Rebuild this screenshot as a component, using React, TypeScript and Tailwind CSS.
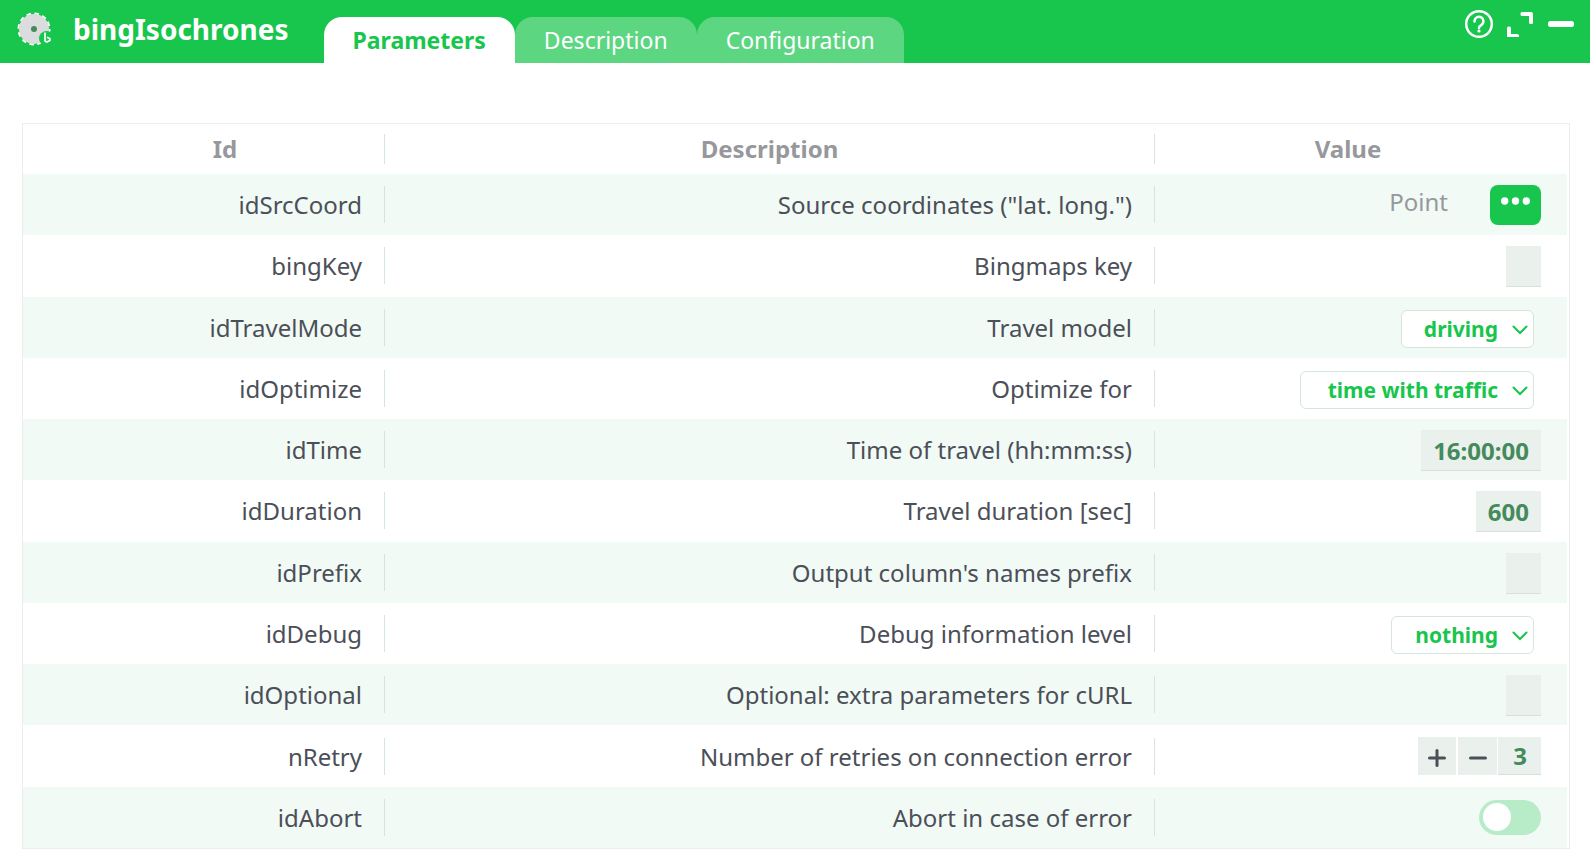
import { useState } from 'react';
import type { ReactNode } from 'react';

type ParamKind = 'point' | 'text' | 'select' | 'number' | 'toggle';

interface Param {
  id: string;
  description: string;
  kind: ParamKind;
  value?: string;
  options?: string[];
  width?: string;
}

const TABS = ['Parameters', 'Description', 'Configuration'];

const PARAMS: Param[] = [
  { id: 'idSrcCoord', description: 'Source coordinates ("lat. long.")', kind: 'point' },
  { id: 'bingKey', description: 'Bingmaps key', kind: 'text', value: '' },
  {
    id: 'idTravelMode',
    description: 'Travel model',
    kind: 'select',
    value: 'driving',
    options: ['driving', 'walking', 'transit'],
    width: 'w-[133px]'
  },
  {
    id: 'idOptimize',
    description: 'Optimize for',
    kind: 'select',
    value: 'time with traffic',
    options: ['time with traffic', 'time', 'distance'],
    width: 'w-[234px]'
  },
  { id: 'idTime', description: 'Time of travel (hh:mm:ss)', kind: 'text', value: '16:00:00' },
  { id: 'idDuration', description: 'Travel duration [sec]', kind: 'text', value: '600' },
  { id: 'idPrefix', description: "Output column's names prefix", kind: 'text', value: '' },
  {
    id: 'idDebug',
    description: 'Debug information level',
    kind: 'select',
    value: 'nothing',
    options: ['nothing', 'errors', 'all'],
    width: 'w-[143px]'
  },
  { id: 'idOptional', description: 'Optional: extra parameters for cURL', kind: 'text', value: '' },
  { id: 'nRetry', description: 'Number of retries on connection error', kind: 'number', value: '3' },
  { id: 'idAbort', description: 'Abort in case of error', kind: 'toggle' }
];

const Logo = () => (
  <svg className="size-[34px] shrink-0" viewBox="0 0 34 34" aria-hidden="true">
    <circle cx="17" cy="17" r="15.5" fill="none" stroke="#fff" strokeWidth="2" strokeDasharray="4.5 3.615" />
    <circle cx="17" cy="17" r="15" fill="#dadcde" />
    <circle cx="17" cy="17" r="3" fill="#458a5c" />
    <circle cx="29.500" cy="26.500" r="7.500" fill="#18c54d" />
    <path d="M28 20.500v8.500l1.800 1 3-1.500v-2l-2.800-1.200" fill="none" stroke="#fff" strokeWidth="1.700" />
  </svg>
);

const HelpIcon = () => (
  <svg className="h-[30px] w-[30px]" viewBox="0 0 30 30" fill="none" stroke="#fff" aria-hidden="true">
    <circle cx="15" cy="15" r="12.800" strokeWidth="2.500" />
    <path d="M10.500 12.500V12a4.500 4.500 0 1 1 6.800 4.100c-1.600 1-2.300 1.200-2.300 3" strokeWidth="2.500" strokeLinecap="round" />
    <circle cx="15" cy="22" r="1.600" fill="#fff" stroke="none" />
  </svg>
);

const ExpandIcon = () => (
  <svg className="h-[30px] w-[30px]" viewBox="0 0 30 30" fill="#fff" aria-hidden="true">
    <path d="M17 3h9q2 0 2 2v8.500q0 1.500-1.500 1.500h-1q-1.500 0-1.500-1.500V7h-7q-1.500 0-1.500-1.500v-1Q15.500 3 17 3z" />
    <path d="M2 19q0-1.500 1.500-1.500h1Q6 17.500 6 19v6h6q2 0 2 1.500v1.500H2z" />
  </svg>
);

const MinimizeIcon = () => (
  <svg className="h-[30px] w-[30px]" viewBox="0 0 30 30" aria-hidden="true">
    <rect x="2" y="12" width="26" height="6" rx="2.500" fill="#fff" />
  </svg>
);

const PlusMinusIcon = ({ plus }: { plus?: boolean }) => (
  <svg className="size-[18px]" viewBox="0 0 18 18" fill="none" stroke="#4b4f58" strokeWidth="3" strokeLinecap="round" aria-hidden="true">
    <path d="M1.500 9h15" />
    {plus && <path d="M9 1.500v15" />}
  </svg>
);

const fieldClass =
  'field-sizing-content border-b border-[#d7e1dc] bg-[#eaf0ec] text-right text-2xl font-bold text-[#458a5c] outline-none';

const PointField = ({ id }: { id: string }) => (
  <div className="flex items-center justify-end">
    <span className="mr-[42px] pb-1.5 text-[#96989c]">Point</span>
    <button
      type="button"
      id={id}
      aria-label="Edit coordinates"
      className="flex h-10 w-[51px] justify-center rounded-lg bg-[#18c54d] pt-3"
    >
      <svg className="h-2 w-[30px]" viewBox="0 0 30 8" fill="#fff" aria-hidden="true">
        <circle cx="3.700" cy="4" r="3.700" />
        <circle cx="14.500" cy="4" r="3.700" />
        <circle cx="25.300" cy="4" r="3.700" />
      </svg>
    </button>
  </div>
);

const TextField = ({ param }: { param: Param }) => {
  const [value, setValue] = useState(param.value ?? '');

  return (
    <div className="flex justify-end pt-0.5">
      <input
        type="text"
        id={param.id}
        value={value}
        onChange={(e) => setValue(e.target.value)}
        className={`${fieldClass} h-[41px] min-w-[35px] px-3`}
      />
    </div>
  );
};

const SelectField = ({ param }: { param: Param }) => {
  const [value, setValue] = useState(param.value);

  return (
    <div className="flex justify-end pr-[7px] pt-[3px]">
      <div className="relative">
        <select
          id={param.id}
          value={value}
          onChange={(e) => setValue(e.target.value)}
          className={`${param.width} block h-[38px] appearance-none rounded-md border border-[#d5e5dd] bg-white pr-[35px] text-right text-[21px] leading-8 font-bold text-[#18c54d] outline-none`}
        >
          {param.options?.map((option) => (
            <option key={option}>{option}</option>
          ))}
        </select>
        <svg
          className="pointer-events-none absolute top-[15px] right-[6px] h-[10px] w-[16px]"
          viewBox="0 0 16 10"
          fill="none"
          stroke="#18c54d"
          strokeWidth="2"
          strokeLinecap="round"
          aria-hidden="true"
        >
          <path d="M1.500 1.500L8 8l6.500-6.500" />
        </svg>
      </div>
    </div>
  );
};

const NumberField = ({ param }: { param: Param }) => {
  const [value, setValue] = useState(Number(param.value));

  return (
    <div className="flex justify-end">
      <button
        type="button"
        aria-label="Increase"
        onClick={() => setValue(value + 1)}
        className="mr-0.5 flex h-[38px] w-[38px] items-center justify-center bg-[#eaf0ec] pt-1"
      >
        <PlusMinusIcon plus />
      </button>
      <button
        type="button"
        aria-label="Decrease"
        onClick={() => setValue(value - 1)}
        className="mr-px flex h-[38px] w-[39px] items-center justify-center bg-[#eaf0ec] pt-1"
      >
        <PlusMinusIcon />
      </button>
      <input
        type="text"
        inputMode="numeric"
        id={param.id}
        value={value}
        onChange={(e) => setValue(Number(e.target.value) || 0)}
        className={`${fieldClass} h-[38px] min-w-[43px] px-[14px]`}
      />
    </div>
  );
};

const ToggleField = ({ id }: { id: string }) => (
  <div className="flex justify-end">
    <input
      type="checkbox"
      role="switch"
      id={id}
      className="flex h-[35px] w-[62px] appearance-none items-center rounded-full bg-[#b8ecc9] px-1 before:size-7 before:rounded-full before:bg-white checked:justify-end checked:bg-[#18c54d]"
    />
  </div>
);

const renderField = (param: Param): ReactNode => {
  switch (param.kind) {
    case 'point':
      return <PointField id={param.id} />;
    case 'select':
      return <SelectField param={param} />;
    case 'number':
      return <NumberField param={param} />;
    case 'toggle':
      return <ToggleField id={param.id} />;
    default:
      return <TextField param={param} />;
  }
};

// Cell content with the short divider on its right side
const Divided = ({ children }: { children: ReactNode }) => (
  <div className="border-r border-[#d5e5dd] pt-px pr-[22px] leading-9">{children}</div>
);

const App = () => {
  const [activeTab, setActiveTab] = useState('Parameters');

  return (
    <div className="flex h-screen flex-col bg-white font-['Noto_Sans',sans-serif] text-2xl text-[#4b4f58]">
      <header className="flex h-[63px] shrink-0 bg-[#18c54d] pl-[17px] text-white">
        <div className="flex h-[58px] items-center">
          <Logo />
          <h1 className="ml-[22px] text-[28px] leading-9 font-bold">bingIsochrones</h1>
        </div>

        <div role="tablist" className="ml-[35px] flex items-end text-[23px]">
          {TABS.map((tab) => (
            <button
              key={tab}
              type="button"
              role="tab"
              aria-selected={activeTab === tab}
              onClick={() => setActiveTab(tab)}
              className={`h-[46px] rounded-t-[18px] px-[29px] ${
                activeTab === tab ? 'bg-white font-bold text-[#18c54d]' : 'bg-[#5dd682] text-white'
              }`}
            >
              {tab}
            </button>
          ))}
        </div>

        <div className="ml-auto flex items-start gap-[11px] pt-[9px] pr-[14px]">
          <button type="button" aria-label="Help">
            <HelpIcon />
          </button>
          <button type="button" aria-label="Maximize">
            <ExpandIcon />
          </button>
          <button type="button" aria-label="Minimize">
            <MinimizeIcon />
          </button>
        </div>
      </header>

      <main className="min-h-0 flex-1 pt-[60px] pr-5 pb-[19px] pl-[22px]">
        <div className="h-full border border-[#e8eeeb] pr-0.5">
          <table className="h-full w-full table-fixed">
            <colgroup>
              <col className="w-[362px]" />
              <col />
              <col className="w-[412px]" />
            </colgroup>
            <thead className="text-[#96989c]">
              <tr className="h-[50px]">
                <th className="p-0">
                  <div className="border-r border-[#d5e5dd] pl-[43px] leading-[30px]">Id</div>
                </th>
                <th className="p-0">
                  <div className="border-r border-[#d5e5dd] leading-[30px]">Description</div>
                </th>
                <th className="p-0 pr-[26px] leading-[30px]">Value</th>
              </tr>
            </thead>
            <tbody>
              {PARAMS.map((param) => (
                <tr key={param.id} className="h-[61px] text-right odd:bg-[#f2faf6]">
                  <td className="p-0">
                    <Divided>
                      <label htmlFor={param.id}>{param.id}</label>
                    </Divided>
                  </td>
                  <td className="p-0">
                    <Divided>{param.description}</Divided>
                  </td>
                  <td className="p-0 pr-[26px]">{renderField(param)}</td>
                </tr>
              ))}
            </tbody>
          </table>
        </div>
      </main>
    </div>
  );
};

export default App;
